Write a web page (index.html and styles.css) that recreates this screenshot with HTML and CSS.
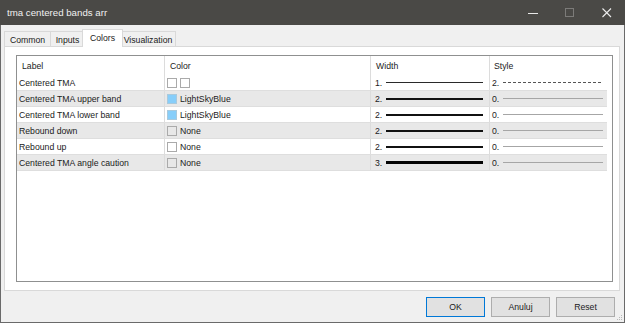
FILE: index.html
```html
<!DOCTYPE html>
<html>
<head>
<meta charset="utf-8">
<link rel="stylesheet" href="styles.css">
</head>
<body>
<div class="window">
  <div class="titlebar">
    <span class="title">tma centered bands arr</span>
    <div class="controls">
      <div class="ctl"><svg width="10" height="10" viewBox="0 0 10 10"><line x1="0" y1="5.5" x2="10" y2="5.5" stroke="#e8e8e8" stroke-width="1"/></svg></div>
      <div class="ctl"><svg width="10" height="10" viewBox="0 0 10 10"><rect x="0.5" y="0.5" width="8" height="8" fill="none" stroke="#7c7b79" stroke-width="1"/></svg></div>
      <div class="ctl"><svg width="10" height="10" viewBox="0 0 10 10"><path d="M0.5 0.5 L9 9 M9 0.5 L0.5 9" stroke="#ececec" stroke-width="1.1" fill="none"/></svg></div>
    </div>
  </div>
  <div class="tabs">
    <div class="tab t-common">Common</div>
    <div class="tab t-inputs">Inputs</div>
    <div class="tab t-colors sel">Colors</div>
    <div class="tab t-vis">Visualization</div>
  </div>
  <div class="panel">
    <div class="list">
      <div class="row head">
        <div class="c c1">Label</div>
        <div class="c c2">Color</div>
        <div class="c c3">Width</div>
        <div class="c c4">Style</div>
      </div>
      <div class="row">
        <div class="c c1">Centered TMA</div>
        <div class="c c2"><span class="sw"></span><span class="sw"></span></div>
        <div class="c c3"><span class="num">1.</span><span class="ln w1"></span></div>
        <div class="c c4"><span class="num">2.</span><span class="ln dash"></span></div>
      </div>
      <div class="row gray">
        <div class="c c1">Centered TMA upper band</div>
        <div class="c c2"><span class="sw blue"></span><span class="ctext">LightSkyBlue</span></div>
        <div class="c c3"><span class="num">2.</span><span class="ln w2"></span></div>
        <div class="c c4"><span class="num">0.</span><span class="ln solid"></span></div>
      </div>
      <div class="row">
        <div class="c c1">Centered TMA lower band</div>
        <div class="c c2"><span class="sw blue"></span><span class="ctext">LightSkyBlue</span></div>
        <div class="c c3"><span class="num">2.</span><span class="ln w2"></span></div>
        <div class="c c4"><span class="num">0.</span><span class="ln solid"></span></div>
      </div>
      <div class="row gray">
        <div class="c c1">Rebound down</div>
        <div class="c c2"><span class="sw"></span><span class="ctext">None</span></div>
        <div class="c c3"><span class="num">2.</span><span class="ln w2"></span></div>
        <div class="c c4"><span class="num">0.</span><span class="ln solid"></span></div>
      </div>
      <div class="row">
        <div class="c c1">Rebound up</div>
        <div class="c c2"><span class="sw"></span><span class="ctext">None</span></div>
        <div class="c c3"><span class="num">2.</span><span class="ln w2"></span></div>
        <div class="c c4"><span class="num">0.</span><span class="ln solid"></span></div>
      </div>
      <div class="row gray">
        <div class="c c1">Centered TMA angle caution</div>
        <div class="c c2"><span class="sw"></span><span class="ctext">None</span></div>
        <div class="c c3"><span class="num">3.</span><span class="ln w3"></span></div>
        <div class="c c4"><span class="num">0.</span><span class="ln solid"></span></div>
      </div>
    </div>
  </div>
  <div class="buttons">
    <div class="btn ok">OK</div>
    <div class="btn">Anuluj</div>
    <div class="btn">Reset</div>
  </div>
  <svg class="grip" width="6" height="6" viewBox="0 0 6 6">
    <rect x="4" y="0" width="1" height="1" fill="#b8b8b8"/>
    <rect x="2" y="2" width="1" height="1" fill="#b8b8b8"/>
    <rect x="4" y="2" width="1" height="1" fill="#b8b8b8"/>
    <rect x="0" y="4" width="1" height="1" fill="#b8b8b8"/>
    <rect x="2" y="4" width="1" height="1" fill="#b8b8b8"/>
    <rect x="4" y="4" width="1" height="1" fill="#b8b8b8"/>
  </svg>
</div>
</body>
</html>
```
FILE: styles.css
```css
* { box-sizing: border-box; }
html, body { margin: 0; padding: 0; }
body {
  width: 625px;
  height: 323px;
  overflow: hidden;
  background: #f0f0f0;
  font-family: "Liberation Sans", Arial, sans-serif;
  font-size: 8.7px;
  color: #1b1b1b;
}
.window {
  position: relative;
  width: 625px;
  height: 323px;
  border: 1px solid #6a6a6a;
  border-top: 0;
  background: #f0f0f0;
  display: flex;
  flex-direction: column;
}
.titlebar {
  height: 25px;
  margin: 0 -1px;
  background: #4a4946;
  color: #f0f0f0;
  display: flex;
  align-items: center;
  padding-left: 7px;
  font-size: 9.7px;
  flex: none;
}
.title { flex: 1; }
.controls { display: flex; height: 100%; }
.ctl {
  width: 37px;
  height: 100%;
  display: flex;
  align-items: center;
  justify-content: center;
}
.tabs {
  display: flex;
  align-items: flex-end;
  height: 17px;
  margin-top: 4px;
  padding-left: 3px;
  flex: none;
}
.tab {
  height: 15px;
  border: 1px solid #d9d9d9;
  border-bottom: 0;
  background: #f0f0f0;
  display: flex;
  align-items: center;
  justify-content: center;
  padding-top: 1px;
}
.t-common { width: 47px; }
.t-inputs { width: 35px; margin-left: -1px; }
.t-colors { width: 41px; margin-left: -3px; margin-right: -2px; }
.t-vis { width: 56px; margin-left: -1px; }
.tab.sel {
  height: 18px;
  margin-bottom: -1px;
  background: #ffffff;
  position: relative;
  z-index: 1;
  padding-top: 0;
  padding-bottom: 2px;
}
.panel {
  height: 245px;
  margin: 0 4px 0 3px;
  border: 1px solid #d9d9d9;
  background: #ffffff;
  padding: 8px 6px 8px 11px;
  flex: none;
}
.list {
  height: 100%;
  border: 1px solid #8f9090;
  background: #ffffff;
}
.row {
  display: flex;
  width: 590px;
  height: 16px;
  border-bottom: 1px solid #dedede;
}
.row.head { height: 19px; border-bottom: 0; }
.row.gray { background: #e8e8e8; }
.c {
  height: 100%;
  display: flex;
  align-items: center;
  white-space: nowrap;
  overflow: hidden;
}
.c1 { width: 148px; border-right: 1px solid #dcdcdc; padding-left: 2px; }
.c2 { width: 206px; border-right: 1px solid #dcdcdc; padding-left: 2px; }
.c3 { width: 119px; border-right: 1px solid #dcdcdc; padding-left: 4px; }
.c4 { width: 117px; padding-left: 2px; }
.head .c1 { padding-left: 5px; }
.head .c2 { padding-left: 5px; }
.head .c3 { padding-left: 5px; }
.head .c4 { padding-left: 4px; }
.sw {
  width: 10px;
  height: 10px;
  border: 1px solid #aaaaaa;
  margin-right: 3px;
  flex: none;
}
.sw.blue { background: #87cefa; border-color: #a9c9dc; }
.num { width: 11px; flex: none; }
.ln { display: block; flex: none; }
.c3 .ln { width: 97px; }
.c4 .ln { width: 100px; }
.w1 { height: 1px; background: #2a2a2a; }
.w2 { height: 2px; background: #111111; }
.w3 { height: 3px; background: #050505; }
.dash { height: 1px; background: repeating-linear-gradient(to right, #555555 0 3px, transparent 3px 5px); }
.solid { height: 1px; background: #a6a6a6; }
.buttons {
  display: flex;
  justify-content: flex-end;
  gap: 6px;
  margin-top: 6px;
  padding-right: 9px;
  flex: none;
}
.btn {
  width: 59px;
  height: 20px;
  border: 1px solid #adadad;
  background: #e1e1e1;
  display: flex;
  align-items: center;
  justify-content: center;
}
.btn.ok { border-color: #0078d7; }
.grip { position: absolute; right: 1px; bottom: 1px; }
```
